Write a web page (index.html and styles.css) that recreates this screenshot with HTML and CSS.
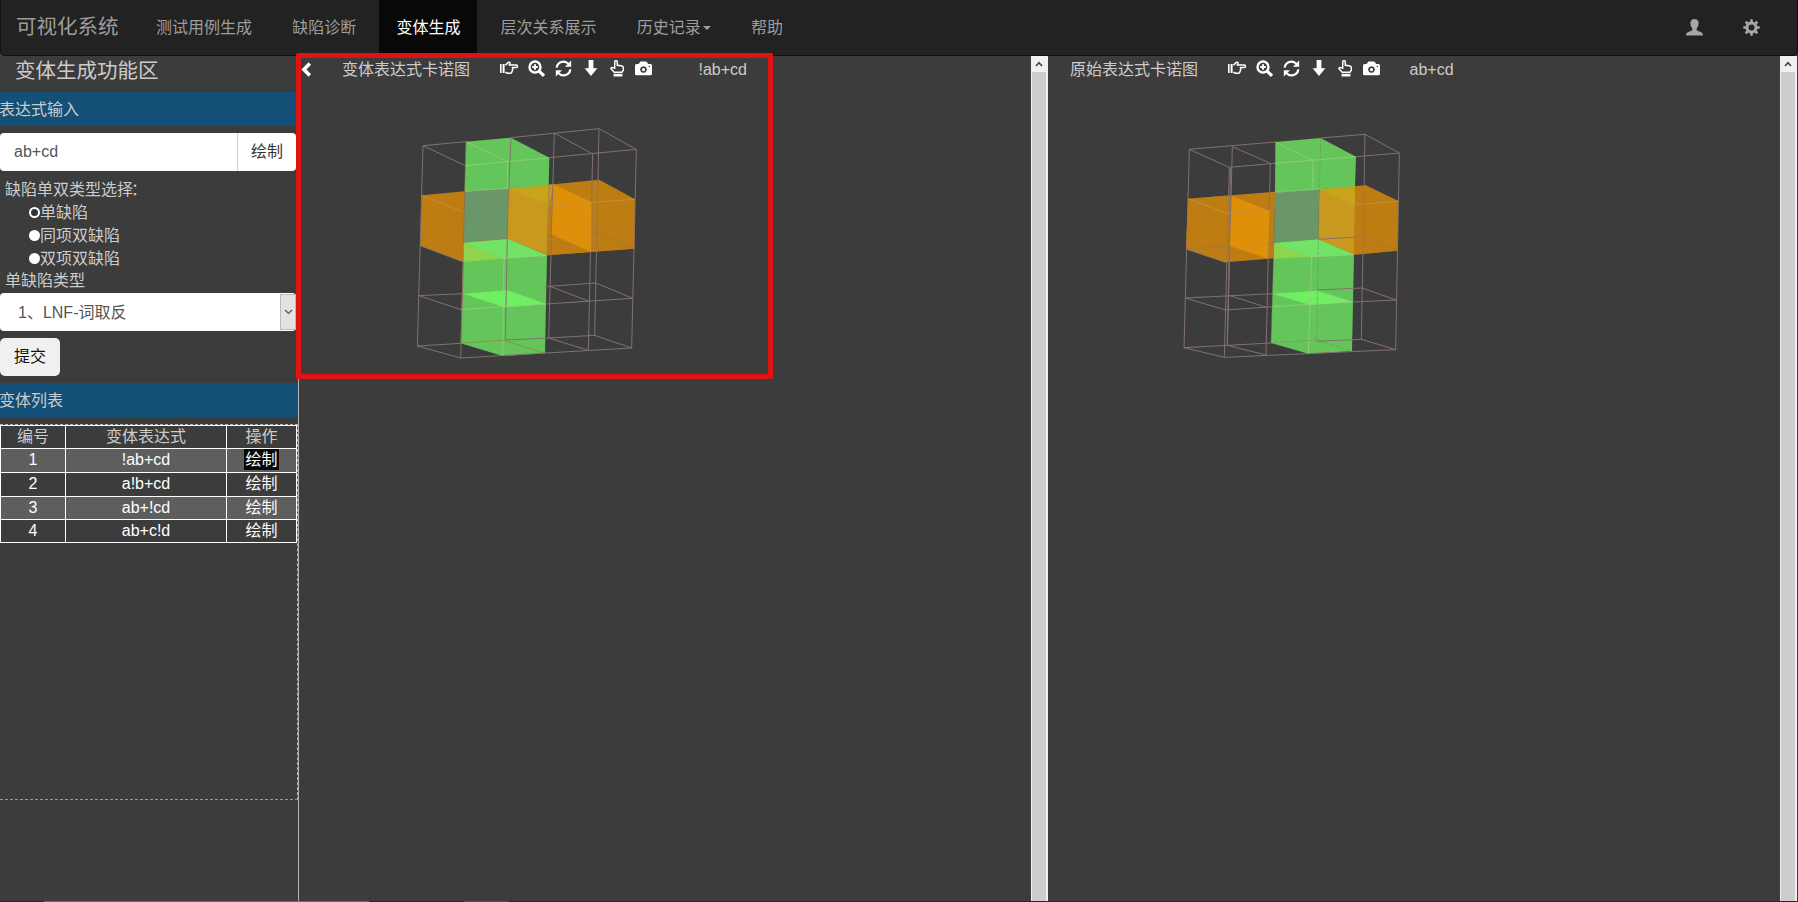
FILE: index.html
```html
<!DOCTYPE html>
<html lang="zh-CN">
<head>
<meta charset="utf-8">
<title>可视化系统</title>
<link rel="stylesheet" href="styles.css">
</head>
<body>
<svg class="defs" width="0" height="0">
  <symbol id="hand-right" viewBox="0 0 18 16">
    <path fill="currentColor" d="M0 4h1.600v9H0zM2.600 4h2v9h-2z"/>
    <path fill="none" stroke="currentColor" stroke-width="1.500" stroke-linejoin="round" d="M5.400 5.200 8.200 2.400Q10 1.600 10 3.200L9.200 5H16q1.600.1 1.600 1.300T16 7.600h-3.600q1 .9 0 2 .5 1-.5 1.900 0 1.700-1.800 1.700H7.500L5.400 12.200"/>
  </symbol>
  <symbol id="zoom-in" viewBox="0 0 18 17">
    <circle cx="7" cy="7" r="5.500" fill="none" stroke="currentColor" stroke-width="2.400"/>
    <path fill="none" stroke="currentColor" stroke-width="2" d="M7 4.200v5.600M4.200 7h5.600"/>
    <path stroke="currentColor" stroke-width="3.200" d="m11.200 11.200 4.800 4.700"/>
  </symbol>
  <symbol id="refresh" viewBox="0 0 17 17">
    <path fill="none" stroke="currentColor" stroke-width="2.200" d="M1.700 7.600A6.700 6.700 0 0 1 13.300 3.800M15.300 9.400A6.700 6.700 0 0 1 3.700 13.200"/>
    <path fill="currentColor" d="M16.200.6v6.200H10zM.8 16.400v-6.200H7z"/>
  </symbol>
  <symbol id="arrow-down" viewBox="0 0 14 16">
    <path fill="currentColor" d="M4.600 0h4.800v8.300H13.400L7 16 .6 8.300h4z"/>
  </symbol>
  <symbol id="hand-up" viewBox="0 0 15 17">
    <path fill="none" stroke="currentColor" stroke-width="1.500" stroke-linejoin="round" d="M4.200 12.300 1.400 9.300Q.5 7.700 2 7.400l2.700.9V2Q4.800.7 6 .7T7.300 2v3.600q1-.8 2 .1 1-.6 2 .3 1.900-.2 2 1.600v2.600l-1.400 2.100z"/>
    <path fill="currentColor" d="M3.600 13.800h8.800v2.700H3.600z"/>
  </symbol>
  <symbol id="camera" viewBox="0 0 17 15">
    <path fill="currentColor" fill-rule="evenodd" d="M1.500 3H3.600L5.400.5h6L13.200 3h2.300Q17 3 17 4.500v8.200q0 1.500-1.500 1.500h-14Q0 14.200 0 12.700V4.500Q0 3 1.500 3M8.500 5.200a3.300 3.300 0 1 0 .01 0M13.600 4.800v1.300h1.300V4.800zM8.500 7a1.600 1.600 0 1 1-.01 0"/>
  </symbol>
</svg>

<nav class="navbar">
  <a class="brand">可视化系统</a>
  <ul class="menu">
    <li>测试用例生成</li>
    <li>缺陷诊断</li>
    <li class="active">变体生成</li>
    <li>层次关系展示</li>
    <li>历史记录<i class="caret"></i></li>
    <li>帮助</li>
  </ul>
  <div class="account">
    <svg width="17" height="17" viewBox="0 0 17 17"><path fill="currentColor" d="M8.500 0C11.200 0 12.700 1.700 12.600 4.300 12.600 6.600 11.800 8.300 10.700 9.300V11.200L15.600 13.500Q17 14.200 17 16.500H0Q0 14.200 1.400 13.500L6.300 11.200V9.300C5.200 8.300 4.400 6.600 4.400 4.300 4.300 1.700 5.800 0 8.500 0"/></svg>
    <svg width="17" height="17" viewBox="-8.500 -8.500 17 17"><circle r="4.500" fill="none" stroke="currentColor" stroke-width="3"/><g fill="currentColor"><path id="tooth" d="M-1.500-5.500-1.100-8.300H1.100L1.500-5.500zM-1.500 5.500-1.100 8.300H1.100L1.500 5.500z"/><use href="#tooth" transform="rotate(45)"/><use href="#tooth" transform="rotate(90)"/><use href="#tooth" transform="rotate(135)"/></g></svg>
  </div>
</nav>

<main class="workspace">
  <aside class="sidebar">
    <h1 class="title">变体生成功能区</h1>
    <h2 class="section">表达式输入</h2>
    <div class="input-group"><span class="field">ab+cd</span><span class="draw">绘制</span></div>
    <div class="label">缺陷单双类型选择<span class="colon">：</span></div>
    <ul class="radios">
      <li><i class="dot checked"></i>单缺陷</li>
      <li><i class="dot"></i>同项双缺陷</li>
      <li><i class="dot"></i>双项双缺陷</li>
    </ul>
    <div class="label type">单缺陷类型</div>
    <div class="select"><span>1、LNF-词取反</span><i><svg width="9" height="6" viewBox="0 0 9 6"><path d="m1 1 3.500 3.500L8 1" fill="none" stroke="#555" stroke-width="1.200"/></svg></i></div>
    <span class="submit">提交</span>
    <h2 class="section list">变体列表</h2>
    <div class="results">
      <div class="table">
        <div class="row head"><b>编号</b><b>变体表达式</b><b>操作</b></div>
        <div class="row odd"><b>1</b><b>!ab+cd</b><b><mark>绘制</mark></b></div>
        <div class="row"><b>2</b><b>a!b+cd</b><b>绘制</b></div>
        <div class="row odd"><b>3</b><b>ab+!cd</b><b>绘制</b></div>
        <div class="row"><b>4</b><b>ab+c!d</b><b>绘制</b></div>
      </div>
    </div>
  </aside>

  <section class="panel variant">
    <div class="content">
      <header class="bar">
        <svg class="back" width="11" height="15" viewBox="0 0 11 15"><path d="M8.800 1.600 3 7.500l5.800 5.900" fill="none" stroke="#fff" stroke-width="3.600"/></svg>
        <span class="name">变体表达式卡诺图</span>
        <span class="tools">
          <svg width="18" height="16"><use href="#hand-right"/></svg>
          <svg width="18" height="17"><use href="#zoom-in"/></svg>
          <svg width="17" height="17"><use href="#refresh"/></svg>
          <svg width="14" height="16"><use href="#arrow-down"/></svg>
          <svg width="15" height="17"><use href="#hand-up"/></svg>
          <svg width="17" height="15"><use href="#camera"/></svg>
        </span>
        <span class="expr">!ab+cd</span>
      </header>
      <svg class="cube" width="260" height="260" viewBox="0 0 780 780">
        <g fill="#bd7d13">
          <path d="M65 256 194 244 190 456 60 407z"/>
          <path d="M326 236 597 209 705 268 703 416 441 436 322 386z"/>
        </g>
        <path fill="#c9991f" d="M326 236 460 223 447 290V436L322 386z"/>
        <path fill="#c8a41b" d="M326 236 447 224V282L410 271z"/>
        <path fill="#bd7d13" d="M447 284 457 282 455 374 575 426 441 436z"/>
        <path fill="#64c65a" d="M198 95 333 83 448 143 446 225 326 236 194 244z"/>
        <path fill="#6a9769" d="M194 244 326 235 322 386 190 397z"/>
        <path fill="#64c65a" d="M190 397 322 386 441 436 435 730 308 738 182 700z"/>
        <path fill="#72e366" d="M190 397 322 386 441 436 305 446z"/>
        <path fill="#8dd54c" d="M190 397 305 446 189 456z"/>
        <path fill="#70ef63" d="M190 551 322 541 438 581 312 592z"/>
        <g fill="none" stroke="#827171" stroke-width="3">
          <path d="M198 95 69 107 52 708 182 744 695 714 709 118 597 56 333 83M69 107 196 167M448 143 709 118M463 69 578 132 565 721 446 684 463 69M597 56 584 676 695 714M446 684 584 676M60 407 190 456M56 557 184 599M56 557 190 551M435 530 588 519 698 565 437 582M453 530 567 574M443 378 588 366 703 416M52 708 182 700M182 744 190 456M326 236 333 83M322 386 316 690 446 684"/>
        </g>
        <path fill="#e4930a" opacity=".85" d="M460 223 575 276V426L455 374z"/>
        <path fill="#bd7d13" opacity=".6" d="M576 276 597 209 705 268 703 416 576 426z"/>
        <g fill="none" stroke="#9bcf81" stroke-width="3" opacity=".75">
          <path d="M196 167 448 143M198 95 323 155M323 155V236M305 446 441 436M312 446 308 738M184 599 437 582M194 244 326 235"/>
        </g>
        <path d="M65 256 192 307M447 286 705 268" fill="none" stroke="#bd9345" stroke-width="2.500"/>
        <path d="M194 244 190 397 322 386 326 236M182 700 308 690 435 730M578 276 575 426M595 209 589 416M447 225 441 436M198 95 194 244 190 456 182 700" fill="none" stroke="#9b7044" stroke-width="2.500" opacity=".7"/>
      </svg>
    </div>
    <div class="scroll"><i><svg width="8" height="6" viewBox="0 0 8 6"><path d="m1 5 3-3.300L7 5" fill="none" stroke="#444" stroke-width="1.700"/></svg></i></div>
    <div class="highlight"></div>
  </section>

  <section class="panel origin">
    <div class="content">
      <header class="bar">
        <span class="name">原始表达式卡诺图</span>
        <span class="tools">
          <svg width="18" height="16"><use href="#hand-right"/></svg>
          <svg width="18" height="17"><use href="#zoom-in"/></svg>
          <svg width="17" height="17"><use href="#refresh"/></svg>
          <svg width="14" height="16"><use href="#arrow-down"/></svg>
          <svg width="15" height="17"><use href="#hand-up"/></svg>
          <svg width="17" height="15"><use href="#camera"/></svg>
        </span>
        <span class="expr">ab+cd</span>
      </header>
      <svg class="cube" width="260" height="260" viewBox="0 0 780 780">
        <g fill="#bd7d13">
          <path d="M84 266 346 245 341 445 196 457 78 417z"/>
          <path d="M478 238 617 226 715 273 713 422 582 434 475 388z"/>
        </g>
        <path fill="#c9991f" d="M478 238 585 228 582 434 475 388z"/>
        <path fill="#c8a41b" d="M478 238 585 228V284L570 280z"/>
        <path fill="#64c65a" d="M346 96 482 84 588 140 585 229 478 238 345 247z"/>
        <path fill="#6a9769" d="M345 247 478 237 475 388 342 399z"/>
        <path fill="#64c65a" d="M342 399 475 388 582 434 576 723 448 732 333 699z"/>
        <path fill="#72e366" d="M342 399 475 388 582 434 448 441z"/>
        <path fill="#8dd54c" d="M342 399 448 441 341 446z"/>
        <path fill="#70ef63" d="M338 551 470 542 577 576 451 585z"/>
        <g fill="none" stroke="#827171" stroke-width="3">
          <path d="M346 96 88 118 72 713 193 742 707 719 718 129 615 73 482 84M88 118 208 172 346 160M588 140 718 129M208 172 193 742M212 172 202 706 318 735 331 160 217 110 202 706M615 73 604 688 707 719M470 694 604 688M72 713 333 699M78 417 196 457M75 564 197 600 337 590M75 564 338 551M207 556 320 592M470 540 606 534 709 570 577 576M78 417 342 399M475 388 609 380 713 422"/>
        </g>
        <path fill="#e4930a" opacity=".85" d="M215 258 329 303 325 446 210 408z"/>
        <path fill="#bd7d13" opacity=".6" d="M586 229 617 226 715 273 713 422 583 434zM84 266 210 256 205 455 196 457 78 417z"/>
        <g fill="none" stroke="#9bcf81" stroke-width="3" opacity=".75">
          <path d="M346 160 588 140M346 96 459 152V238M448 441 582 434M455 440 445 732M337 590 577 576M470 542 577 576M345 247 478 237"/>
        </g>
        <path d="M84 266 203 311 329 301M582 285 715 273" fill="none" stroke="#bd9345" stroke-width="2.500"/>
        <path d="M346 96 345 247 342 399 333 699 470 690 576 723M482 84 478 238 475 388 470 694" fill="none" stroke="#887657" stroke-width="2.500" stroke-dasharray="12 5" opacity=".6"/>
      </svg>
    </div>
    <div class="scroll"><i><svg width="8" height="6" viewBox="0 0 8 6"><path d="m1 5 3-3.300L7 5" fill="none" stroke="#444" stroke-width="1.700"/></svg></i></div>
  </section>
</main>
<footer class="edge"></footer>
</body>
</html>
```
FILE: styles.css
```css
* { box-sizing: border-box; }
body {
  margin: 0;
  height: 902px;
  overflow: hidden;
  display: flex;
  flex-direction: column;
  background: #3c3c3c;
  color: #ccc;
  font: 16px/23px "Liberation Sans", "Noto Sans CJK SC", sans-serif;
}
ul { list-style: none; margin: 0; padding: 0; }
i, b { font-style: normal; font-weight: normal; }
svg { display: block; }
.defs { position: absolute; }

.navbar {
  height: 56px;
  flex: none;
  display: flex;
  background: #222;
  border: 1px solid #101010;
  border-top: 0;
  border-radius: 0 0 5px 5px;
  color: #9d9d9d;
  line-height: 54px;
}
.brand { width: 122px; padding-left: 15px; font-size: 20.5px; white-space: nowrap; flex: none; }
.menu { display: flex; gap: 6.200px; padding-left: 16px; }
.menu li { padding: 0 17px; height: 55px; white-space: nowrap; display: flex; align-items: center; }
.menu .active { background: #080808; color: #fff; }
.caret { border: 4.500px solid transparent; border-top-color: #9d9d9d; border-bottom: 0; margin-left: 2px; }
.account { margin-left: auto; display: flex; align-items: center; gap: 40px; padding-right: 37px; color: #a6a6a6; }

.workspace { display: flex; flex: 1; min-height: 0; }
.sidebar { width: 299px; flex: none; border-right: 1px solid #b5b5b5; }
.title { margin: 0; height: 36px; padding: 3px 0 0 15px; font-size: 20.500px; line-height: 24px; font-weight: normal; white-space: nowrap; }
.section { margin: 0; height: 34px; background: #144f77; font-size: 16px; line-height: 35px; font-weight: normal; text-indent: -1px; }
.input-group { display: flex; width: 296px; height: 38px; margin: 7px 0 6px; background: #fff; border-radius: 4px; line-height: 38px; color: #555; overflow: hidden; }
.field { flex: 1; padding-left: 14px; }
.draw { width: 59px; padding-left: 13px; border-left: 1px solid #ccc; color: #333; }
.label { padding-left: 5px; height: 24px; line-height: 25px; }
.colon { margin-left: -2px; }
.radios { padding-left: 29px; }
.radios li { display: flex; align-items: center; height: 23px; }
.dot { width: 11px; height: 11px; border-radius: 50%; background: #fff; }
.dot.checked { background: #333; border: 2px solid #fff; }
.label.type { height: 23px; line-height: 22px; }
.select { width: 296px; height: 38px; display: flex; background: #fff; border-radius: 4px; color: #555; line-height: 40px; overflow: hidden; }
.select span { flex: 1; padding-left: 18px; }
.select i { width: 16px; margin: 1px 0; background: #e3e3e3; border: 1px solid #bbb; display: flex; align-items: center; justify-content: center; }
.submit { display: block; width: 60px; height: 38px; margin: 7px 0; background: #f0f0f0; border-radius: 5px; color: #111; text-align: center; line-height: 38px; }
.results { width: 298px; height: 376px; margin-top: 7px; border-top: 1px dashed #b5b5b5; border-right: 1px dashed #b5b5b5; border-bottom: 1px dashed #999; }
.table { width: 297px; background: #fff; padding: 1px; display: grid; grid-template-rows: 22px 23px 23px 22px 22px; gap: 1px; }
.row { display: grid; grid-template-columns: 64px 160px 1fr; gap: 1px; min-height: 0; }
.row b { background: #3c3c3c; color: #fff; text-align: center; line-height: 21px; height: 100%; overflow: hidden; }
.row.head b { color: #ccc; }
.row.odd b { background: #5e5e5e; }
mark { display: inline-block; height: 21px; line-height: 21px; padding: 0 1px; background: #080808; color: #fff; vertical-align: top; }

.panel { display: flex; position: relative; min-width: 0; }
.variant { width: 749px; }
.origin { width: 749px; }
.content { flex: 1; }
.bar { display: flex; height: 26px; align-items: center; white-space: nowrap; }
.back { margin: 0 30px 0 2px; }
.origin .name { margin-left: 22px; }
.tools { display: flex; align-items: center; gap: 9.500px; margin: -2px 0 0 30px; color: #fff; }
.tools svg:nth-child(4) { margin-left: 2px; margin-right: 3px; }
.expr { margin-left: 47px; }
.origin .expr { margin-left: 30px; }
.cube { margin: 28px 0 0 101px; }
.origin .cube { margin-left: 112px; }
.scroll { width: 17px; background: #cdcdcd; border: solid #f0f0f0; border-width: 0 2px 0 1px; }
.scroll i { height: 16px; background: #f0f0f0; display: flex; align-items: center; justify-content: center; }
.highlight { position: absolute; left: -3px; top: -3px; width: 477px; height: 326px; border: 5px solid #e01212; border-radius: 2px; }
.edge { height: 1px; flex: none; background: linear-gradient(90deg, #2c2424 44px, #696969 44px 369px, #31251f 369px 464px, #55503f 464px 509px, #31251f 509px); }
```
